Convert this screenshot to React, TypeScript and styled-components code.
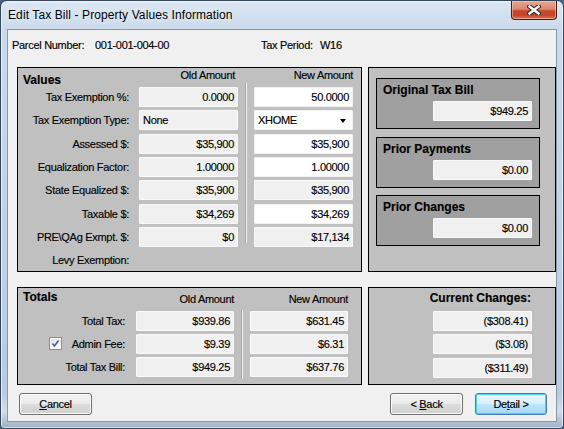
import React from 'react'
import styled, { createGlobalStyle } from 'styled-components'

const GlobalStyle = createGlobalStyle`
  html, body {
    margin: 0;
    padding: 0;
    background: #4a6480;
  }
  body {
    font-family: 'Liberation Sans', Arial, sans-serif;
    font-size: 11px;
    letter-spacing: -0.3px;
    color: #000;
    -webkit-text-stroke: 0.15px #000;
  }
  * {
    box-sizing: border-box;
  }
`

const Window = styled.div`
  width: 564px;
  height: 429px;
  display: flex;
  flex-direction: column;
  border: 1px solid #33465c;
  border-radius: 7px 7px 4px 4px;
  background: linear-gradient(to bottom, #dce7f3 0px, #cbdaeb 28px, #c2d3e7 50%, #b8cbe1 92%, #d3dde8 96%, #9fb1c6 100%);
  box-shadow: inset 0 0 0 1px rgba(255, 255, 255, 0.6);
  overflow: hidden;
`

const TitleBar = styled.div`
  height: 28px;
  display: flex;
  align-items: flex-start;
  padding-left: 7px;
`

const Title = styled.div`
  font-size: 12px;
  letter-spacing: 0.1px;
  line-height: 28px;
  color: #000;
  -webkit-text-stroke: 0;
  text-shadow: 0 0 6px rgba(255, 255, 255, 0.9);
`

const CloseButton = styled.div`
  margin-left: auto;
  margin-right: 6px;
  width: 46px;
  height: 19px;
  display: flex;
  align-items: center;
  justify-content: center;
  border: 1px solid #47201a;
  border-top: none;
  border-radius: 0 0 4px 4px;
  background: linear-gradient(to bottom, #e9a794 0%, #dc8670 45%, #c7452b 55%, #c4442a 80%, #dd7a5c 100%);
  box-shadow: inset 0 0 0 1px rgba(255, 210, 190, 0.5);
`

const Client = styled.div`
  flex: 1;
  margin: 0 6px 6px 6px;
  border: 1px solid #8597ad;
  background: #f0f0f0;
  display: flex;
  flex-direction: column;
  padding-top: 8px;
`

const InfoRow = styled.div`
  height: 14px;
  display: flex;
  align-items: center;
  padding-left: 4px;
  white-space: nowrap;
`

const InfoCell = styled.span<{ $w?: number }>`
  width: ${p => (p.$w ? `${p.$w}px` : 'auto')};
`

const PanelRow = styled.div<{ $h: number; $top: number }>`
  display: grid;
  grid-template-columns: 345px 188px;
  column-gap: 6px;
  height: ${p => p.$h}px;
  margin-top: ${p => p.$top}px;
  padding-left: 9px;
`

const Panel = styled.div`
  border: 1px solid #000;
  background: #c0c0c0;
`

const PanelHead = styled.div<{ $cols: string; $h: number }>`
  display: grid;
  grid-template-columns: ${p => p.$cols};
  height: ${p => p.$h}px;
`

const PanelTitle = styled.div<{ $top: number }>`
  font-size: 12px;
  font-weight: bold;
  letter-spacing: 0;
  line-height: 14px;
  padding-left: 5px;
  padding-top: ${p => p.$top}px;
`

const ColHead = styled.div<{ $top: number; $right?: number }>`
  text-align: right;
  line-height: 13px;
  padding-top: ${p => p.$top}px;
  padding-right: ${p => p.$right ?? 0}px;
  white-space: nowrap;
`

const FieldGrid = styled.div<{ $cols: string; $rows: number }>`
  display: grid;
  grid-template-columns: ${p => p.$cols};
  grid-template-rows: repeat(${p => p.$rows}, 20px);
  row-gap: 3.35px;
`

const RowLabel = styled.div<{ $pad: number }>`
  display: flex;
  align-items: center;
  justify-content: flex-end;
  gap: 10px;
  padding-right: ${p => p.$pad}px;
  line-height: 20px;
  white-space: nowrap;
  grid-column: 1;
`

const Divider = styled.div<{ $span: number; $top: number; $bottom: number }>`
  grid-column: 3;
  grid-row: 1 / span ${p => p.$span};
  justify-self: center;
  width: 2px;
  margin-top: ${p => p.$top}px;
  margin-bottom: ${p => p.$bottom}px;
  border-left: 1px solid #a3a3a3;
  border-right: 1px solid #f4f4f4;
`

const Box = styled.div<{ $editable?: boolean; $w?: number; $col?: number; $left?: boolean }>`
  width: ${p => p.$w ?? 99}px;
  height: 20px;
  display: flex;
  align-items: center;
  justify-content: ${p => (p.$left ? 'flex-start' : 'flex-end')};
  padding: 0 3px 0 3px;
  background: ${p => (p.$editable ? '#ffffff' : '#f0f0f0')};
  border: 1px solid ${p => (p.$editable ? '#f2f2f2' : '#fafafa')};
  border-radius: 1px;
  white-space: nowrap;
  ${p => (p.$col ? `grid-column: ${p.$col};` : '')}
`

const Combo = styled(Box)`
  justify-content: space-between;
  padding-right: 6px;
`

const Arrow = styled.span`
  width: 0;
  height: 0;
  margin-top: 1px;
  border-left: 3.5px solid transparent;
  border-right: 3.5px solid transparent;
  border-top: 4px solid #000;
`

const CheckBox = styled.span`
  width: 13px;
  height: 13px;
  display: flex;
  align-items: center;
  justify-content: center;
  border: 1px solid #8e8f8f;
  background: linear-gradient(135deg, #dcdcdc 0%, #f6f6f6 60%, #ffffff 100%);
  box-shadow: inset 0 0 0 1px #f4f4f4;
`

const SidePanel = styled(Panel)`
  display: flex;
  flex-direction: column;
  gap: 7.5px;
  padding: 10px 15px 0 7px;
`

const SummaryBox = styled.div`
  height: 51px;
  display: flex;
  flex-direction: column;
  align-items: flex-end;
  padding: 4px 7px 0 6px;
  border: 1px solid #000;
  background: #a0a0a0;
`

const SummaryTitle = styled.div`
  align-self: stretch;
  font-size: 12px;
  font-weight: bold;
  letter-spacing: 0;
  line-height: 14px;
  margin-bottom: 4px;
`

const ChangesPanel = styled(Panel)`
  display: flex;
  flex-direction: column;
  align-items: flex-end;
  gap: 3.35px;
  padding: 3px 23px 0 0;
`

const ChangesTitle = styled.div`
  font-size: 12px;
  font-weight: bold;
  letter-spacing: 0;
  line-height: 14px;
  margin: 0 1px 2.7px 0;
`

const ButtonRow = styled.div`
  display: flex;
  gap: 12px;
  height: 22px;
  margin-top: 8px;
  padding: 0 9px 0 11px;
`

const Button = styled.div<{ $default?: boolean }>`
  width: ${p => (p.$default ? 72 : 73)}px;
  height: 22px;
  display: flex;
  align-items: center;
  justify-content: center;
  border: 1px solid ${p => (p.$default ? '#3c7fb1' : '#707070')};
  border-radius: 3px;
  background: ${p =>
    p.$default
      ? 'linear-gradient(to bottom, #eaf6fd 0%, #d9f0fc 50%, #bee6fd 51%, #a7d9f5 100%)'
      : 'linear-gradient(to bottom, #f2f2f2 0%, #ebebeb 50%, #dddddd 51%, #cfcfcf 100%)'};
  box-shadow: inset 0 0 0 1px ${p => (p.$default ? '#48d0f7' : '#fbfbfb')};
  white-space: nowrap;
  &:first-child {
    margin-right: auto;
  }
`

const Mnemonic = styled.span`
  text-decoration: underline;
`

const colsValues = '121px 99px 16px 99px'
const colsTotals = '118px 98px 16px 98px'

type Row = { label: string; old: string; next: string; editable?: boolean; combo?: boolean }

const valueRows: Row[] = [
  { label: 'Tax Exemption %:', old: '0.0000', next: '50.0000', editable: true },
  { label: 'Tax Exemption Type:', old: 'None', next: 'XHOME', editable: true, combo: true },
  { label: 'Assessed $:', old: '$35,900', next: '$35,900', editable: true },
  { label: 'Equalization Factor:', old: '1.00000', next: '1.00000', editable: true },
  { label: 'State Equalized $:', old: '$35,900', next: '$35,900' },
  { label: 'Taxable $:', old: '$34,269', next: '$34,269', editable: true },
  { label: 'PRE\\QAg Exmpt. $:', old: '$0', next: '$17,134' },
]

const totalRows: Row[] = [
  { label: 'Total Tax:', old: '$939.86', next: '$631.45' },
  { label: 'Admin Fee:', old: '$9.39', next: '$6.31' },
  { label: 'Total Tax Bill:', old: '$949.25', next: '$637.76' },
]

const summaries = [
  { title: 'Original Tax Bill', value: '$949.25' },
  { title: 'Prior Payments', value: '$0.00' },
  { title: 'Prior Changes', value: '$0.00' },
]

const changes = ['($308.41)', '($3.08)', '($311.49)']

const CloseGlyph = () => (
  <svg width="14" height="10" viewBox="0 0 14 10">
    <path d="M2.5 1.5 L11.5 8.5 M11.5 1.5 L2.5 8.5" stroke="#3b2a28" strokeWidth="4.6" strokeLinecap="square" />
    <path d="M2.5 1.5 L11.5 8.5 M11.5 1.5 L2.5 8.5" stroke="#ffffff" strokeWidth="2.4" strokeLinecap="square" />
  </svg>
)

const CheckMark = () => (
  <svg width="9" height="9" viewBox="0 0 9 9">
    <path d="M1.5 4.5 L3.5 7 L7.5 1.5" stroke="#4a5f97" strokeWidth="1.6" fill="none" />
  </svg>
)

export default function App() {
  return (
    <>
      <GlobalStyle />
      <Window>
        <TitleBar>
          <Title>Edit Tax Bill - Property Values Information</Title>
          <CloseButton>
            <CloseGlyph />
          </CloseButton>
        </TitleBar>
        <Client>
          <InfoRow>
            <InfoCell $w={83}>Parcel Number:</InfoCell>
            <InfoCell $w={166}>001-001-004-00</InfoCell>
            <InfoCell $w={59}>Tax Period:</InfoCell>
            <InfoCell>W16</InfoCell>
          </InfoRow>

          <PanelRow $h={205} $top={15}>
            <Panel>
              <PanelHead $cols={colsValues} $h={19}>
                <PanelTitle $top={5}>Values</PanelTitle>
                <ColHead $top={1} $right={3}>Old Amount</ColHead>
                <span />
                <ColHead $top={1}>New Amount</ColHead>
              </PanelHead>
              <FieldGrid $cols={colsValues} $rows={8}>
                {valueRows.map(r => (
                  <React.Fragment key={r.label}>
                    <RowLabel $pad={10}>{r.label}</RowLabel>
                    {r.combo ? (
                      <>
                        <Box $col={2} $left>{r.old}</Box>
                        <Combo $col={4} $editable>
                          {r.next}
                          <Arrow />
                        </Combo>
                      </>
                    ) : (
                      <>
                        <Box $col={2}>{r.old}</Box>
                        <Box $col={4} $editable={r.editable}>{r.next}</Box>
                      </>
                    )}
                  </React.Fragment>
                ))}
                <RowLabel $pad={10}>Levy Exemption:</RowLabel>
                <Divider $span={7} $top={-4} $bottom={4} />
              </FieldGrid>
            </Panel>

            <SidePanel>
              {summaries.map(s => (
                <SummaryBox key={s.title}>
                  <SummaryTitle>{s.title}</SummaryTitle>
                  <Box>{s.value}</Box>
                </SummaryBox>
              ))}
            </SidePanel>
          </PanelRow>

          <PanelRow $h={98} $top={15}>
            <Panel>
              <PanelHead $cols={colsTotals} $h={22.5}>
                <PanelTitle $top={2}>Totals</PanelTitle>
                <ColHead $top={5} $right={-1}>Old Amount</ColHead>
                <span />
                <ColHead $top={5} $right={-1}>New Amount</ColHead>
              </PanelHead>
              <FieldGrid $cols={colsTotals} $rows={3}>
                {totalRows.map(r => (
                  <React.Fragment key={r.label}>
                    <RowLabel $pad={11}>
                      {r.label === 'Admin Fee:' && (
                        <CheckBox>
                          <CheckMark />
                        </CheckBox>
                      )}
                      {r.label}
                    </RowLabel>
                    <Box $col={2} $w={98}>{r.old}</Box>
                    <Box $col={4} $w={98}>{r.next}</Box>
                  </React.Fragment>
                ))}
                <Divider $span={3} $top={-1} $bottom={-2} />
              </FieldGrid>
            </Panel>

            <ChangesPanel>
              <ChangesTitle>Current Changes:</ChangesTitle>
              {changes.map(c => (
                <Box key={c}>{c}</Box>
              ))}
            </ChangesPanel>
          </PanelRow>

          <ButtonRow>
            <Button>
              <Mnemonic>C</Mnemonic>ancel
            </Button>
            <Button>
              &lt;&nbsp;<Mnemonic>B</Mnemonic>ack
            </Button>
            <Button $default>
              De<Mnemonic>t</Mnemonic>ail &gt;
            </Button>
          </ButtonRow>
        </Client>
      </Window>
    </>
  )
}
